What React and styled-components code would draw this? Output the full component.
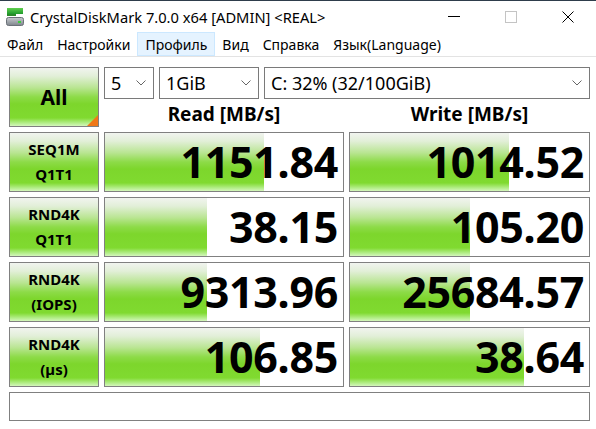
import React from "react";
import styled, { createGlobalStyle } from "styled-components";

const GlobalStyle = createGlobalStyle`
  html, body { margin: 0; padding: 0; background: #ffffff; }
  body { font-family: "Noto Sans", "Open Sans", sans-serif; color: #000; }
`;

const Window = styled.div`
  width: 596px;
  height: 429px;
  background: #ffffff;
  border-top: 1px solid #2e3d4b;
  box-sizing: border-box;
  overflow: hidden;
`;

const TitleBar = styled.div`
  height: 31px;
  display: flex;
  align-items: center;
  padding-left: 6px;
`;

const Title = styled.span`
  font-size: 14.7px;
  margin-left: 6px;
  flex: 1;
  white-space: nowrap;
`;

const Controls = styled.div`
  display: flex;
  height: 100%;
`;

const Ctl = styled.div`
  width: 57px;
  display: flex;
  align-items: center;
  justify-content: center;
`;

const MenuBar = styled.div`
  height: 24px;
  display: flex;
  align-items: stretch;
  border-bottom: 1px solid #e3e3e3;
`;

const MenuItem = styled.div`
  display: flex;
  align-items: center;
  padding: 0 ${(p) => p.$pad || 6}px;
  font-size: 14px;
  box-sizing: border-box;
  background: ${(p) => (p.$hover ? "#e5f3ff" : "transparent")};
  border: 1px solid ${(p) => (p.$hover ? "#cce8ff" : "transparent")};
`;

const Main = styled.div`
  padding: 10px 0 0 9px;
  display: grid;
  grid-template-columns: 90px 240px 241px;
  grid-template-rows: 60px repeat(4, 60px) 29px;
  column-gap: 5px;
  row-gap: 5px;
`;

const greenGrad = `linear-gradient(to bottom,
  #f1f4ef 0%, #e2efd8 14%, #b9e592 34%, #8ddb48 50%,
  #7dd62c 62%, #80da30 86%, #b4ee8a 95%, #d4f6bc 100%)`;

const AllButton = styled.div`
  grid-row: 1;
  grid-column: 1;
  position: relative;
  border: 1px solid #808080;
  box-sizing: border-box;
  background: ${greenGrad};
  display: flex;
  align-items: center;
  justify-content: center;
  font-weight: 700;
  font-size: 21px;
  &::after {
    content: "";
    position: absolute;
    right: 0;
    bottom: 0;
    border-style: solid;
    border-width: 0 0 11px 11px;
    border-color: transparent transparent #f07818 transparent;
  }
`;

const TopRight = styled.div`
  grid-row: 1;
  grid-column: 2 / 4;
  display: flex;
  flex-direction: column;
`;

const Combos = styled.div`
  display: flex;
  gap: 5px;
  height: 32px;
`;

const Combo = styled.div`
  width: ${(p) => p.$w}px;
  flex: ${(p) => (p.$w ? "none" : 1)};
  border: 1px solid #7a7a7a;
  box-sizing: border-box;
  background: #fff;
  display: flex;
  align-items: center;
  justify-content: space-between;
  padding: 0 7px 0 6px;
  font-size: 18px;
`;

const Headers = styled.div`
  flex: 1;
  display: grid;
  grid-template-columns: 240px 241px;
  column-gap: 5px;
  align-items: center;
`;

const Header = styled.div`
  text-align: center;
  font-weight: 700;
  font-size: 19px;
  padding-top: 2px;
`;

const Label = styled.div`
  border: 1px solid #808080;
  box-sizing: border-box;
  background: ${greenGrad};
  display: flex;
  flex-direction: column;
  align-items: center;
  justify-content: center;
  font-weight: 700;
  font-size: 15px;
  line-height: 25px;
`;

const Meter = styled.div`
  position: relative;
  border: 1px solid #808080;
  box-sizing: border-box;
  background: #fff;
  display: flex;
  align-items: center;
  justify-content: flex-end;
  padding-right: 5px;
  overflow: hidden;
`;

const Fill = styled.div`
  position: absolute;
  left: 0;
  top: 0;
  bottom: 0;
  background: ${greenGrad};
`;

const Value = styled.span`
  position: relative;
  font-weight: 700;
  font-size: 43px;
  line-height: 1;
  letter-spacing: -0.3px;
  padding-bottom: 2px;
`;

const Status = styled.div`
  grid-column: 1 / 4;
  border: 1px solid #808080;
  box-sizing: border-box;
  background: #fff;
`;

const Chevron = () => (
  <svg width="10" height="6" viewBox="0 0 10 6">
    <path d="M0.5 0.5 L5 5 L9.5 0.5" fill="none" stroke="#666" strokeWidth="1" />
  </svg>
);

const AppIcon = () => (
  <svg width="18" height="20" viewBox="0 0 18 20">
    <defs>
      <linearGradient id="g1" x1="0" y1="0" x2="0" y2="1">
        <stop offset="0" stopColor="#5fcf4e" />
        <stop offset="1" stopColor="#1f9a2c" />
      </linearGradient>
      <linearGradient id="g2" x1="0" y1="0" x2="0" y2="1">
        <stop offset="0" stopColor="#c9ccd0" />
        <stop offset="1" stopColor="#7f858c" />
      </linearGradient>
    </defs>
    <rect x="1" y="1" width="16" height="6" fill="url(#g1)" />
    <rect x="1" y="7" width="9" height="2" fill="#2a8a2a" />
    <rect x="0.5" y="10.5" width="17" height="8" rx="2" fill="url(#g2)" stroke="#6b7178" />
    <rect x="12" y="14" width="3" height="2" fill="#3ccf3c" />
  </svg>
);

const rows = [
  { l1: "SEQ1M", l2: "Q1T1", r: "1151.84", rw: 67, w: "1014.52", ww: 66.5 },
  { l1: "RND4K", l2: "Q1T1", r: "38.15", rw: 43, w: "105.20", ww: 50 },
  { l1: "RND4K", l2: "(IOPS)", r: "9313.96", rw: 43, w: "25684.57", ww: 50 },
  { l1: "RND4K", l2: "(µs)", r: "106.85", rw: 65, w: "38.64", ww: 73 },
];

const menus = [
  { t: "Файл", pad: 6 },
  { t: "Настройки", pad: 6 },
  { t: "Профиль", pad: 7, hover: true },
  { t: "Вид", pad: 6 },
  { t: "Справка", pad: 6 },
  { t: "Язык(Language)", pad: 6 },
];

export default function App() {
  return (
    <>
      <GlobalStyle />
      <Window>
        <TitleBar>
          <AppIcon />
          <Title>CrystalDiskMark 7.0.0 x64 [ADMIN] &lt;REAL&gt;</Title>
          <Controls>
            <Ctl>
              <svg width="12" height="2"><rect width="12" height="1" fill="#000" /></svg>
            </Ctl>
            <Ctl>
              <svg width="12" height="12"><rect x="0.5" y="0.5" width="11" height="11" fill="none" stroke="#c4c4c4" /></svg>
            </Ctl>
            <Ctl>
              <svg width="12" height="12"><path d="M0.5 0.5 L11.5 11.5 M11.5 0.5 L0.5 11.5" stroke="#000" strokeWidth="1" /></svg>
            </Ctl>
          </Controls>
        </TitleBar>
        <MenuBar>
          {menus.map((m) => (
            <MenuItem key={m.t} $pad={m.pad} $hover={m.hover}>{m.t}</MenuItem>
          ))}
        </MenuBar>
        <Main>
          <AllButton>All</AllButton>
          <TopRight>
            <Combos>
              <Combo $w={50}>5<Chevron /></Combo>
              <Combo $w={100}>1GiB<Chevron /></Combo>
              <Combo>C: 32% (32/100GiB)<Chevron /></Combo>
            </Combos>
            <Headers>
              <Header>Read [MB/s]</Header>
              <Header>Write [MB/s]</Header>
            </Headers>
          </TopRight>
          {rows.map((r, i) => (
            <React.Fragment key={i}>
              <Label>
                <span>{r.l1}</span>
                <span>{r.l2}</span>
              </Label>
              <Meter>
                <Fill style={{ width: `${r.rw}%` }} />
                <Value>{r.r}</Value>
              </Meter>
              <Meter>
                <Fill style={{ width: `${r.ww}%` }} />
                <Value>{r.w}</Value>
              </Meter>
            </React.Fragment>
          ))}
          <Status />
        </Main>
      </Window>
    </>
  );
}
